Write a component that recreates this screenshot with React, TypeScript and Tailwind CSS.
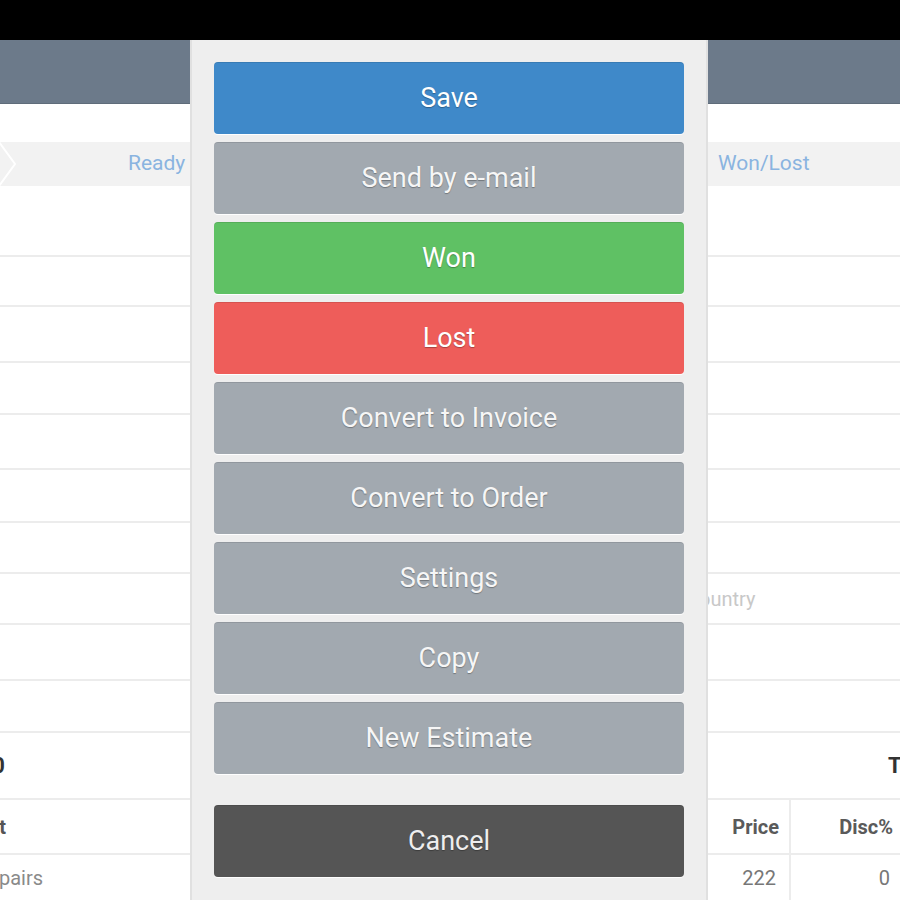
import React from 'react';

type Action = { label: string; className: string };

const actions: Action[] = [
  { label: 'Save', className: 'bg-[#3f89c9] text-white' },
  { label: 'Send by e-mail', className: 'bg-[#a2a9b0] text-[#f6f6f6]' },
  { label: 'Won', className: 'bg-[#5fc164] text-white' },
  { label: 'Lost', className: 'bg-[#ee5d5a] text-white' },
  { label: 'Convert to Invoice', className: 'bg-[#a2a9b0] text-[#f6f6f6]' },
  { label: 'Convert to Order', className: 'bg-[#a2a9b0] text-[#f6f6f6]' },
  { label: 'Settings', className: 'bg-[#a2a9b0] text-[#f6f6f6]' },
  { label: 'Copy', className: 'bg-[#a2a9b0] text-[#f6f6f6]' },
  { label: 'New Estimate', className: 'bg-[#a2a9b0] text-[#f6f6f6]' },
];

const Row: React.FC<{ h: string; left?: React.ReactNode; right?: React.ReactNode }> = ({ h, left, right }) => (
  <div className={`flex border-b-2 border-[#ececec] ${h}`}>
    <div className="flex w-[190px] shrink-0 items-center">{left}</div>
    <div className="w-[518px] shrink-0" />
    <div className="flex flex-1 items-center">{right}</div>
  </div>
);

const ActionButton: React.FC<{ action: Action; extra?: string }> = ({ action, extra = '' }) => (
  <button
    className={`flex h-[72px] w-full items-center justify-center rounded-[4px] border-t border-black/10 text-[27px] shadow-[0_1px_0_rgba(255,255,255,0.9)] [text-shadow:0_1px_1px_rgba(0,0,0,0.3)] ${action.className} ${extra}`}
  >
    {action.label}
  </button>
);

const App: React.FC = () => {
  return (
    <div className="relative h-[900px] w-[900px] overflow-hidden bg-white font-['Roboto',sans-serif]">
      <div className="h-10 bg-black" />
      <div className="h-16 border-b border-[#5f6c7a] bg-[#6c7a8a]" />
      <div className="h-[38px]" />

      {/* status steps */}
      <div className="flex h-11 items-center bg-[#f2f2f2] text-[21px] text-[#8ab4e0]">
        <div className="flex w-[718px] shrink-0 items-center">
          <svg width="18" height="44" viewBox="0 0 18 44" className="shrink-0">
            <polyline points="-1,0 15,22 -1,44" fill="none" stroke="#ffffff" strokeWidth="2" />
          </svg>
          <span className="ml-[110px]">Ready</span>
        </div>
        <span>Won/Lost</span>
      </div>

      <Row h="h-[71px]" />
      <Row h="h-[50px]" />
      <Row h="h-[56px]" />
      <Row h="h-[52px]" />
      <Row h="h-[55px]" />
      <Row h="h-[53px]" />
      <Row h="h-[51px]" />
      <Row h="h-[51px]" right={<span className="-ml-[22px] text-[20px] text-[#c8c8c8]">Country</span>} />
      <Row h="h-[56px]" />
      <Row h="h-[52px]" />
      <Row
        h="h-[67px]"
        left={
          <div className="-ml-[112px] w-[117px] shrink-0 whitespace-nowrap text-right text-[22px] font-bold text-[#333]">
            Items (0
          </div>
        }
        right={<span className="ml-[180px] whitespace-nowrap text-[22px] font-bold text-[#333]">Total</span>}
      />
      <Row
        h="h-[55px]"
        left={
          <div className="-ml-[100px] w-[106px] shrink-0 whitespace-nowrap text-right text-[20px] font-bold text-[#555]">
            Product
          </div>
        }
        right={
          <div className="flex h-full text-[20px] font-bold text-[#5a5a5a]">
            <div className="flex w-[83px] items-center justify-end border-r-2 border-[#ececec] pr-[10px]">Price</div>
            <div className="flex w-[110px] items-center justify-end pr-[8px]">Disc%</div>
          </div>
        }
      />
      <div className="flex h-[45px]">
        <div className="flex w-[190px] shrink-0 items-center">
          <div className="-ml-[100px] w-[143px] shrink-0 whitespace-nowrap text-right text-[20px] text-[#8a8a8a]">
            Repairs
          </div>
        </div>
        <div className="w-[518px] shrink-0" />
        <div className="flex h-full text-[20px] text-[#777]">
          <div className="flex w-[83px] items-center justify-end border-r-2 border-[#ececec] pr-[13px]">222</div>
          <div className="flex w-[110px] items-center justify-end pr-[11px]">0</div>
        </div>
      </div>

      {/* action sheet */}
      <div className="absolute bottom-0 left-[190px] top-10 w-[518px] border-x-2 border-[#e0e0e0] bg-[#eeeeee] px-[22px] pt-[22px]">
        <div className="flex flex-col gap-2">
          {actions.map((a) => (
            <ActionButton key={a.label} action={a} />
          ))}
        </div>
        <ActionButton
          action={{ label: 'Cancel', className: 'bg-[#555555] text-[#eeeeee]' }}
          extra="mt-[31px]"
        />
      </div>
    </div>
  );
};

export default App;
